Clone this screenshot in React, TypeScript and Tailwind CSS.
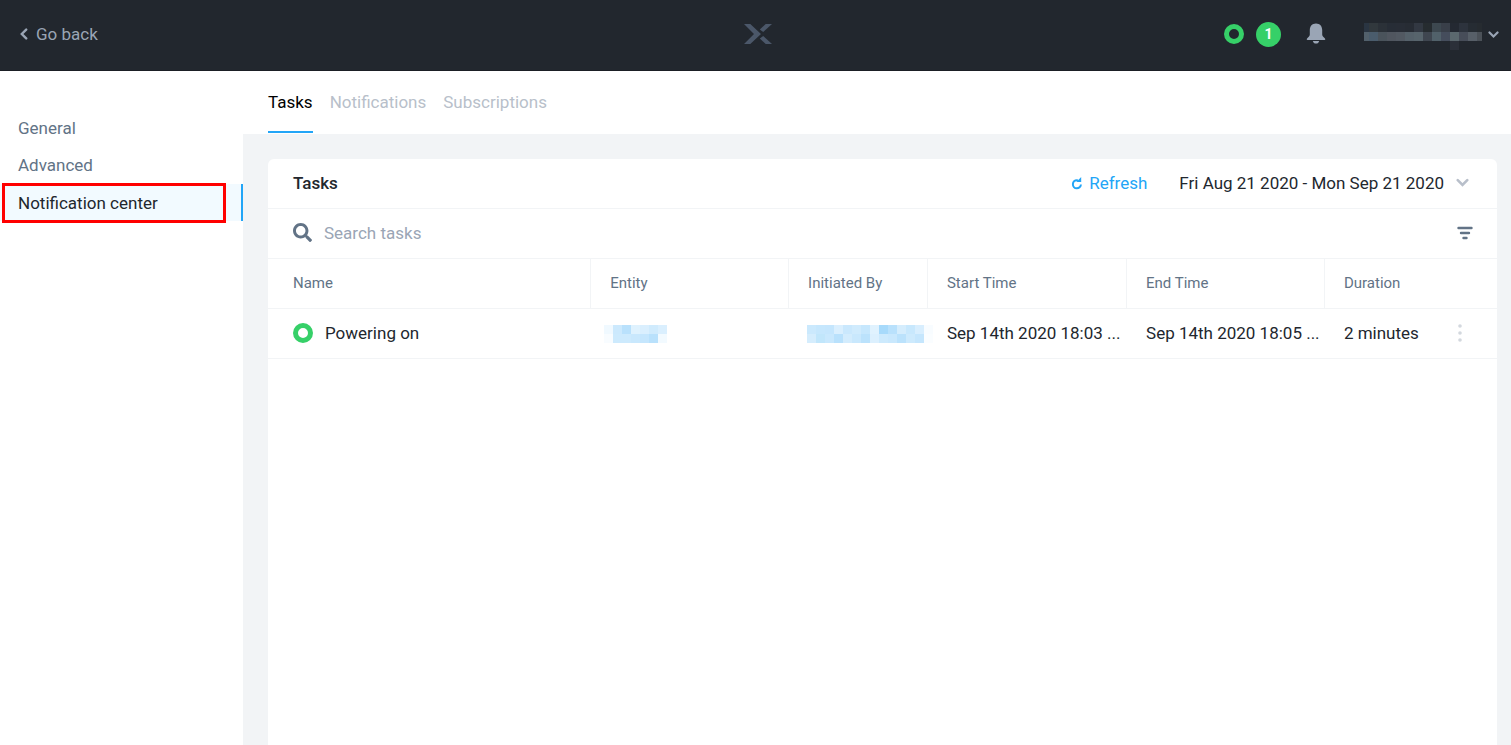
import React from 'react';
import { FaSearch } from 'react-icons/fa';

const NAV_ITEMS = ['General', 'Advanced', 'Notification center'];
const TABS = ['Tasks', 'Notifications', 'Subscriptions'];

const TASKS = [
    {
        id: 'task-1',
        name: 'Powering on',
        start: 'Sep 14th 2020 18:03 ...',
        end: 'Sep 14th 2020 18:05 ...',
        duration: '2 minutes',
    },
];

// Redacted values, one colour per 9px block
const USER_BLOCKS = [
    ['#2a3542', '#31383d', '#2b3138', '#272d36', '#282d36', '#272c34', '#323842', '#262c30', '#3d4850', '#393f49', '#242932', '#2d333d', '#262c33', '#262b30'],
    ['#52606b', '#4a5c6c', '#4a535b', '#50565f', '#525962', '#55616a', '#57646c', '#3f4650', '#51616a', '#454d5c', '#5b686e', '#474d59', '#575f68', '#4b5158'],
    ['', '', '', '', '', '', '', '', '', '', '#2b3039', '', '', ''],
];
const ENTITY_BLOCKS = [
    ['#f0f9ff', '#cce9fd', '#b9e1fc', '#dff2fe', '#daeffe', '#d0ebfd', '#daeffe'],
    ['#f8fcff', '#cdeafd', '#cdeafd', '#c9e8fd', '#c5e6fd', '#b9e1fc', '#f2faff'],
];
const INITIATOR_BLOCKS = [
    ['#cbe9fd', '#c6e7fd', '#c5e6fd', '#daeffe', '#cae8fd', '#d0ebfd', '#c6e7fd', '#e0f2fe', '#a7dafb', '#b9e1fc', '#d5edfd', '#c8e8fd', '#d8eefe', '#f8fcff'],
    ['#d5edfd', '#c1e6fb', '#c9e8fd', '#b9e1fc', '#d3ecfd', '#c9e8fd', '#bbe2fc', '#dcf0fe', '#cdeafd', '#c9e8fd', '#bbe2fc', '#cdeafd', '#c5e6fd', '#fafdff'],
];

interface BlocksProps {
    rows: string[][];
    trim?: number;
    className?: string;
}

// trim cuts that many pixels off the first and the last column
const Blocks: React.FC<BlocksProps> = ({ rows, trim = 0, className }) => {
    const width = rows[0].length * 9 - trim * 2;
    const height = rows.length * 9;

    return (
        <svg
            width={width}
            height={height}
            viewBox={`${trim} 0 ${width} ${height}`}
            shapeRendering="crispEdges"
            className={className}
            aria-hidden="true"
        >
            {rows.map((row, y) =>
                row.map((fill, x) => fill && <rect key={`${x}-${y}`} x={x * 9} y={y * 9} width="9" height="9" fill={fill} />)
            )}
        </svg>
    );
};

const Logo = () => (
    <svg width="28" height="20" viewBox="0 0 28 20" fill="#4b5769" aria-hidden="true">
        <path d="M0 0h6.3L17 10 6.3 20H0l10-10z" />
        <path d="M21.7 0H28l-8.8 8-3.4-2.6z" />
        <path d="M21.7 20H28l-8.8-8-3.4 2.6z" />
    </svg>
);

const Chevron = ({ size, className }: { size: number; className?: string }) => (
    <svg width={size} height={size} viewBox="0 0 12 12" fill="none" stroke="currentColor" strokeWidth="2.4" strokeLinecap="round" className={className} aria-hidden="true">
        <path d="M1.6 3.8 6 8.2l4.4-4.4" />
    </svg>
);

const BellIcon = () => (
    <svg width="20" height="22" viewBox="0 0 20 22" fill="currentColor" aria-hidden="true">
        <path d="M10 .5c-3.9 0-6.2 2.8-6.2 6.6v4.4c0 1.3-.6 2-1.8 2.9-.8.6-1.3 1.2-1.3 1.9 0 .4.3.7.8.7h17c.5 0 .8-.3.8-.7 0-.7-.5-1.3-1.3-1.9-1.2-.9-1.8-1.6-1.8-2.9V7.1C16.2 3.3 13.9.5 10 .5z" />
        <path d="M6.8 18h6.4c-.4 1.7-1.6 2.6-3.2 2.6S7.2 19.7 6.8 18z" />
    </svg>
);

const RefreshIcon = () => (
    <svg width="12" height="14" viewBox="0 0 12 14" aria-hidden="true">
        <path d="M7 4.4C3.9 3.6 1.9 5.6 1.9 8.1a4 4 0 0 0 8 .4" fill="none" stroke="currentColor" strokeWidth="2" />
        <path d="M10.2 1v5H5.4z" fill="currentColor" />
    </svg>
);

const FilterIcon = () => (
    <svg width="16" height="14" viewBox="0 0 16 14" stroke="#627386" strokeWidth="2.4" strokeLinecap="round" aria-hidden="true">
        <path d="M1.5 2h13M4 7h8M6.5 12h3" />
    </svg>
);

const App: React.FC = () => {
    return (
        <div className="flex min-h-screen flex-col bg-white font-['Roboto',sans-serif] text-[17px] leading-6 text-[#22272e]">
            <header className="grid h-[71px] grid-cols-3 items-center border-b border-[#1b1f25] bg-[#22272e] pr-3 pb-0.5 pl-[18px] text-[#9aa5b5]">
                <a href="#back" className="flex items-center gap-1.5">
                    <Chevron size={12} className="rotate-90" />
                    Go back
                </a>
                <div className="flex justify-center">
                    <Logo />
                </div>
                <div className="flex items-center justify-end">
                    <span className="size-5 rounded-full border-5 border-[#36d068]" />
                    <span className="ml-3 flex size-[25px] items-center justify-center rounded-full bg-[#36d068] text-sm font-bold text-white">1</span>
                    <button type="button" aria-label="Alerts" className="ml-[25px]">
                        <BellIcon />
                    </button>
                    <button type="button" aria-label="Account" className="ml-[38px] flex items-center gap-1.5">
                        <Blocks rows={USER_BLOCKS} trim={4} className="mt-1" />
                        <Chevron size={11} />
                    </button>
                </div>
            </header>

            <div className="flex flex-1">
                <nav className="w-[243px] shrink-0 pt-[39px]">
                    {NAV_ITEMS.map((item) => {
                        const active = item === 'Notification center';
                        return (
                            <a
                                key={item}
                                href="#settings"
                                className={`relative flex h-[37px] items-center pl-[18px] ${active ? 'border-r-2 border-[#22a5f7] bg-[#f2faff]' : 'pb-0.5 text-[#627386]'}`}
                            >
                                {item}
                                {active && <span className="absolute -top-px right-[15px] -bottom-0.5 left-0.5 border-3 border-[#ff0000]" />}
                            </a>
                        );
                    })}
                </nav>

                <main className="flex min-w-0 flex-1 flex-col bg-[#f2f4f6]">
                    <div className="flex h-[63px] gap-[17px] bg-white pl-[25px]">
                        {TABS.map((tab) => (
                            <button
                                key={tab}
                                type="button"
                                className={`mb-px border-b-2 pt-0.5 ${tab === 'Tasks' ? 'border-[#22a5f7] text-black' : 'border-transparent text-[#b8bfca]'}`}
                            >
                                {tab}
                            </button>
                        ))}
                    </div>

                    <section className="mt-[25px] mr-3.5 ml-[25px] flex-1 rounded-t-md bg-white">
                        <div className="flex h-[50px] items-center border-b border-[#f2f4f6] pr-7 pb-0.5 pl-[25px]">
                            <h2 className="flex-1 font-medium">Tasks</h2>
                            <button type="button" className="mr-8 flex items-center gap-1.5 text-[#22a5f7]">
                                <RefreshIcon />
                                Refresh
                            </button>
                            <button type="button" className="flex items-center gap-3">
                                Fri Aug 21 2020 - Mon Sep 21 2020
                                <Chevron size={13} className="text-[#b8bfca]" />
                            </button>
                        </div>

                        <div className="flex h-[50px] items-center gap-3 border-b border-[#f2f4f6] pr-6 pb-0.5 pl-[25px]">
                            <FaSearch size={19} className="text-[#627386]" />
                            <input
                                type="text"
                                aria-label="Search tasks"
                                placeholder="Search tasks"
                                className="min-w-0 flex-1 outline-none placeholder:text-[#9aa5b5]"
                            />
                            <button type="button" aria-label="Filter">
                                <FilterIcon />
                            </button>
                        </div>

                        <table className="w-full table-fixed border-separate border-spacing-0 text-left whitespace-nowrap">
                            <thead className="text-[15px] text-[#627386]">
                                <tr className="h-[50px] *:border-b *:border-[#f2f4f6] *:pb-0.5 *:font-normal">
                                    <th className="w-[26.3%] border-r pl-[25px]">Name</th>
                                    <th className="w-[16.1%] border-r pl-[19px]">Entity</th>
                                    <th className="w-[11.3%] border-r pl-[19px]">Initiated By</th>
                                    <th className="w-[16.2%] border-r pl-[19px]">Start Time</th>
                                    <th className="w-[16.1%] border-r pl-[19px]">End Time</th>
                                    <th className="pl-[19px]">Duration</th>
                                </tr>
                            </thead>
                            <tbody>
                                {TASKS.map((task) => (
                                    <tr key={task.id} className="h-[50px] *:border-b *:border-[#f2f4f6]">
                                        <td className="pb-0.5 pl-[25px]">
                                            <div className="flex items-center gap-3">
                                                <span className="size-5 rounded-full border-5 border-[#36d068]" />
                                                {task.name}
                                            </div>
                                        </td>
                                        <td className="pl-[13px]">
                                            <Blocks rows={ENTITY_BLOCKS} />
                                        </td>
                                        <td className="pl-[18px]">
                                            <Blocks rows={INITIATOR_BLOCKS} />
                                        </td>
                                        <td className="pb-0.5 pl-[19px]">{task.start}</td>
                                        <td className="pb-0.5 pl-[19px]">{task.end}</td>
                                        <td className="pb-0.5 pl-[19px]">
                                            <div className="flex items-center justify-between pr-[35px]">
                                                {task.duration}
                                                <button type="button" aria-label="Task actions">
                                                    <svg width="4" height="18" viewBox="0 0 4 18" fill="#d3d8de" aria-hidden="true">
                                                        <circle cx="2" cy="2" r="1.8" />
                                                        <circle cx="2" cy="9" r="1.8" />
                                                        <circle cx="2" cy="16" r="1.8" />
                                                    </svg>
                                                </button>
                                            </div>
                                        </td>
                                    </tr>
                                ))}
                            </tbody>
                        </table>
                    </section>
                </main>
            </div>
        </div>
    );
};

export default App;
